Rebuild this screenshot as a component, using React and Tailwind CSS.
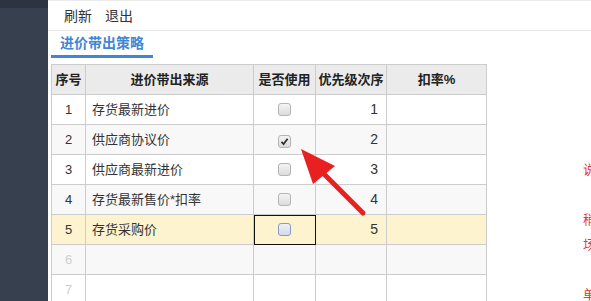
import React from "react";

const rows = [
  { no: 1, source: "存货最新进价", used: false, order: 1 },
  { no: 2, source: "供应商协议价", used: true, order: 2 },
  { no: 3, source: "供应商最新进价", used: false, order: 3 },
  { no: 4, source: "存货最新售价*扣率", used: false, order: 4 },
  { no: 5, source: "存货采购价", used: false, order: 5, active: true },
  { no: 6 },
  { no: 7 },
  { no: 8 },
];

const Check = ({ checked, focus }) => (
  <span
    className={`inline-flex h-[13px] w-[13px] items-center justify-center rounded-[3px] border bg-gradient-to-b ${
      focus
        ? "border-[#8a9bbd] from-[#eef1f8] to-[#d3d9e6]"
        : "border-[#b4b4b4] from-[#f4f4f4] to-[#dcdcdc]"
    }`}
  >
    {checked && (
      <svg width="9" height="9" viewBox="0 0 9 9">
        <path d="M1.5 4.8 L3.6 7 L7.6 1.8" fill="none" stroke="#333" strokeWidth="1.8" />
      </svg>
    )}
  </span>
);

export default function App() {
  return (
    <div
      className="flex h-[301px] w-[591px] overflow-hidden bg-white text-[#333]"
      style={{ fontFamily: '"Liberation Sans", "Noto Sans CJK SC", sans-serif' }}
    >
      {/* sidebar */}
      <aside className="flex w-[48px] shrink-0 flex-col">
        <div className="h-[8px] bg-[#2c3441]" />
        <div className="flex-1 bg-[#36404f]" />
      </aside>

      <main className="relative flex min-w-0 flex-1 flex-col border-t border-[#ececec]">
        {/* toolbar */}
        <div className="flex h-[30px] shrink-0 items-center gap-[13px] border-b border-[#e6e6e6] pl-[16px] text-[14px] leading-[20px]">
          <span>刷新</span>
          <span>退出</span>
        </div>

        <div className="flex">
          {/* left content */}
          <div className="w-[535px] shrink-0 pl-[3px]">
            <div className="inline-block w-[102px] border-b-[3px] border-[#3f86d4] pb-[2px] pt-[2px] text-center text-[14px] font-bold leading-[20px] text-[#3f86d4]">
              进价带出策略
            </div>

            <table className="mt-[6px] w-[435px] table-fixed border-collapse text-[13px]">
              <colgroup>
                <col className="w-[34px]" />
                <col className="w-[168px]" />
                <col className="w-[62px]" />
                <col className="w-[71px]" />
                <col className="w-[100px]" />
              </colgroup>
              <thead>
                <tr className="h-[30px] bg-[#ebebeb] font-bold text-[#222]">
                  <th className="border border-[#cccccc] p-0 text-center">序号</th>
                  <th className="border border-[#cccccc] p-0 text-center">进价带出来源</th>
                  <th className="border border-[#cccccc] p-0 text-center">是否使用</th>
                  <th className="border border-[#cccccc] p-0 text-center">优先级次序</th>
                  <th className="border border-[#cccccc] p-0 text-center">扣率%</th>
                </tr>
              </thead>
              <tbody>
                {rows.map((r) => {
                  const bg = r.active ? "bg-[#fdf4cf]" : r.no % 2 === 0 ? "bg-[#f8f8f8]" : "bg-white";
                  const empty = !r.source;
                  return (
                    <tr key={r.no} className={`h-[30px] ${bg}`}>
                      <td
                        className={`border border-[#cccccc] p-0 text-center ${
                          empty ? "text-[#cfcfcf]" : "text-[#333]"
                        }`}
                      >
                        {r.no}
                      </td>
                      <td className="border border-[#cccccc] px-[6px] py-0">{r.source}</td>
                      <td
                        className={`border border-[#cccccc] p-0 text-center ${
                          r.active ? "outline outline-1 -outline-offset-1 outline-[#111]" : ""
                        }`}
                      >
                        {!empty && (
                          <span className="relative top-[2px]">
                            <Check checked={r.used} focus={r.active} />
                          </span>
                        )}
                      </td>
                      <td className="border border-[#cccccc] py-0 pr-[8px] text-right text-[14px]">
                        {r.order}
                      </td>
                      <td className="border border-[#cccccc] p-0" />
                    </tr>
                  );
                })}
              </tbody>
            </table>
          </div>

          {/* note panel */}
          <div className="shrink-0 whitespace-nowrap pt-[126px] text-[13px] leading-[25px] text-[#e0383e]">
            <p>说明：按优先级次序带出进价</p>
            <p>&nbsp;</p>
            <p>稍后根据扣率计算</p>
            <p>场景：采购订单</p>
            <p>&nbsp;</p>
            <p>单价为空时不带出</p>
          </div>
        </div>

        {/* red arrow */}
        <svg
          className="pointer-events-none absolute left-0 top-0"
          width="543"
          height="300"
          viewBox="48 0 543 300"
        >
          <line x1="363" y1="212" x2="318" y2="167" stroke="#e8201f" strokeWidth="5" strokeLinecap="round" />
          <polygon points="301,148 313,183 335,165" fill="#e8201f" />
        </svg>
      </main>
    </div>
  );
}
